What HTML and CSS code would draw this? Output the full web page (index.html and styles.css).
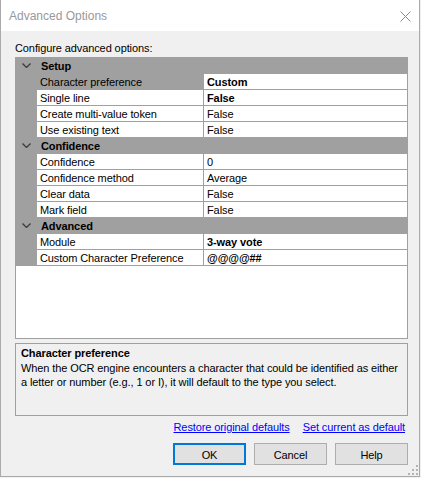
FILE: index.html
```html
<!DOCTYPE html>
<html>
<head>
<meta charset="utf-8">
<link rel="stylesheet" href="styles.css">
</head>
<body>
<div class="window">
  <div class="titlebar">
    <span class="title">Advanced Options</span>
    <svg class="close" width="11" height="11" viewBox="0 0 11 11"><path d="M0.5 0.5 L10.5 10.5 M10.5 0.5 L0.5 10.5" stroke="#8a8a8a" stroke-width="1" fill="none"/></svg>
  </div>
  <div class="content">
    <div class="caption">Configure advanced options:</div>
    <div class="grid">
      <div class="row cat"><div class="margin"><svg class="chev" width="9" height="5" viewBox="0 0 9 5"><polyline points="0.5,0.5 4.5,4.5 8.5,0.5" stroke="#3c3c3c" stroke-width="1.3" fill="none"/></svg></div><div class="cat-name">Setup</div></div>
      <div class="row"><div class="margin"></div><div class="label selected">Character preference</div><div class="value bold">Custom</div></div>
      <div class="row"><div class="margin"></div><div class="label">Single line</div><div class="value bold">False</div></div>
      <div class="row"><div class="margin"></div><div class="label">Create multi-value token</div><div class="value">False</div></div>
      <div class="row"><div class="margin"></div><div class="label">Use existing text</div><div class="value">False</div></div>
      <div class="row cat"><div class="margin"><svg class="chev" width="9" height="5" viewBox="0 0 9 5"><polyline points="0.5,0.5 4.5,4.5 8.5,0.5" stroke="#3c3c3c" stroke-width="1.3" fill="none"/></svg></div><div class="cat-name">Confidence</div></div>
      <div class="row"><div class="margin"></div><div class="label">Confidence</div><div class="value">0</div></div>
      <div class="row"><div class="margin"></div><div class="label">Confidence method</div><div class="value">Average</div></div>
      <div class="row"><div class="margin"></div><div class="label">Clear data</div><div class="value">False</div></div>
      <div class="row"><div class="margin"></div><div class="label">Mark field</div><div class="value">False</div></div>
      <div class="row cat"><div class="margin"><svg class="chev" width="9" height="5" viewBox="0 0 9 5"><polyline points="0.5,0.5 4.5,4.5 8.5,0.5" stroke="#3c3c3c" stroke-width="1.3" fill="none"/></svg></div><div class="cat-name">Advanced</div></div>
      <div class="row"><div class="margin"></div><div class="label">Module</div><div class="value bold">3-way vote</div></div>
      <div class="row"><div class="margin"></div><div class="label">Custom Character Preference</div><div class="value bold">@@@@##</div></div>
    </div>
    <div class="desc">
      <div class="desc-title">Character preference</div>
      <div class="desc-text">When the OCR engine encounters a character that could be identified as either<br>a letter or number (e.g., 1 or I), it will default to the type you select.</div>
    </div>
    <div class="links">
      <a href="#">Restore original defaults</a>
      <a href="#">Set current as default</a>
    </div>
    <div class="buttons">
      <div class="btn default">OK</div>
      <div class="btn">Cancel</div>
      <div class="btn">Help</div>
    </div>
  </div>
  <svg class="grip" width="10" height="10" viewBox="0 0 10 10" fill="#b4b4b4">
    <rect x="8" y="0" width="2" height="2"/>
    <rect x="4" y="4" width="2" height="2"/>
    <rect x="8" y="4" width="2" height="2"/>
    <rect x="0" y="8" width="2" height="2"/>
    <rect x="4" y="8" width="2" height="2"/>
    <rect x="8" y="8" width="2" height="2"/>
  </svg>
</div>
</body>
</html>
```

FILE: styles.css
```css
* { box-sizing: border-box; }

body {
  margin: 0;
  background: #f0f0f0;
  font-family: "Liberation Sans", Arial, sans-serif;
  font-size: 11px;
  letter-spacing: -0.1px;
  color: #000;
}

.window {
  position: relative;
  width: 420px;
  height: 477px;
  border: 1px solid #aaaaaa;
  border-top: none;
  background: #f0f0f0;
  display: flex;
  flex-direction: column;
}

.titlebar {
  height: 31px;
  flex: none;
  background: #fff;
  display: flex;
  align-items: center;
  justify-content: space-between;
  padding: 1px 8px 0 8px;
}

.title {
  font-size: 12px;
  color: #999;
  letter-spacing: 0;
}

.close { display: block; }

.content {
  padding: 10px 11px 0 14px;
  display: flex;
  flex-direction: column;
}

.caption {
  line-height: 14px;
  margin-bottom: 2px;
}

.grid {
  height: 282px;
  border: 1px solid #a0a0a0;
  background: #fff;
  display: flex;
  flex-direction: column;
}

.row {
  display: flex;
  height: 16px;
  flex: none;
  border-bottom: 1px solid #a0a0a0;
  line-height: 14px;
}

.margin {
  width: 21px;
  flex: none;
  background: #a0a0a0;
  display: flex;
  align-items: center;
  padding-left: 6px;
}

.chev { display: block; }

.label {
  width: 167px;
  flex: none;
  border-right: 1px solid #a0a0a0;
  padding: 1px 0 0 3px;
  white-space: nowrap;
}

.label.selected { background: #a0a0a0; }

.value {
  flex: 1;
  padding: 1px 0 0 3px;
  white-space: nowrap;
}

.bold { font-weight: bold; }

.cat { background: #a0a0a0; }

.cat-name {
  font-weight: bold;
  padding: 1px 0 0 4px;
}

.desc {
  margin-top: 4px;
  height: 73px;
  border: 1px solid #a0a0a0;
  padding: 2px 5px 0 5px;
}

.desc-title {
  font-weight: bold;
  line-height: 14px;
  margin-bottom: 1px;
}

.desc-text {
  line-height: 14px;
  white-space: nowrap;
}

.links {
  margin-top: 4px;
  line-height: 14px;
  display: flex;
  justify-content: flex-end;
  gap: 13px;
  padding-right: 3px;
}

.links a {
  color: #0000ff;
  text-decoration: underline;
}

.buttons {
  margin-top: 9px;
  display: flex;
  justify-content: flex-end;
  gap: 8px;
}

.btn {
  width: 73px;
  height: 22px;
  border: 1px solid #adadad;
  background: #e1e1e1;
  display: flex;
  align-items: center;
  justify-content: center;
  padding-top: 1px;
}

.btn.default { border: 2px solid #0078d7; }

.grip {
  position: absolute;
  right: 1px;
  bottom: 1px;
}
```
